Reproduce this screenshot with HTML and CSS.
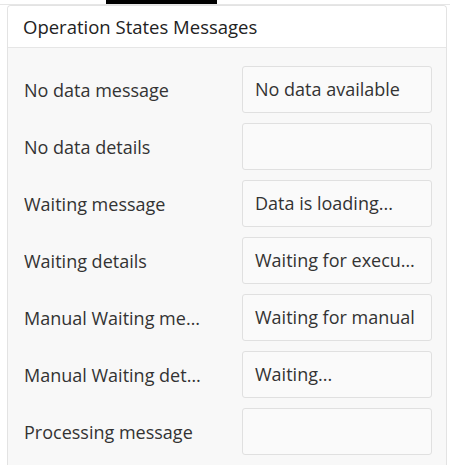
FILE: index.html
```html
<!DOCTYPE html>
<html lang="en">
<head>
    <meta charset="UTF-8">
    <meta name="viewport" content="width=device-width, initial-scale=1.0">
    <title>Operation States Messages</title>
    <link rel="stylesheet" href="styles.css">
</head>
<body>

    <div class="tabs">
        <div class="tab-ativa"></div>
    </div>

    <div class="painel">
        <div class="painel-titulo">Operation States Messages</div>

        <div class="painel-corpo">
            <div class="linha">
                <span class="rotulo">No data message</span>
                <div class="campo">No data available</div>
            </div>
            <div class="linha">
                <span class="rotulo">No data details</span>
                <div class="campo"></div>
            </div>
            <div class="linha">
                <span class="rotulo">Waiting message</span>
                <div class="campo">Data is loading...</div>
            </div>
            <div class="linha">
                <span class="rotulo">Waiting details</span>
                <div class="campo">Waiting for execution to start</div>
            </div>
            <div class="linha">
                <span class="rotulo">Manual Waiting message</span>
                <div class="campo">Waiting for manual</div>
            </div>
            <div class="linha">
                <span class="rotulo">Manual Waiting details</span>
                <div class="campo">Waiting...</div>
            </div>
            <div class="linha">
                <span class="rotulo">Processing message</span>
                <div class="campo"></div>
            </div>
        </div>
    </div>

</body>
</html>
```

FILE: styles.css
```css
body {
    font-family: "Open Sans", Arial, sans-serif;
    background-color: white;
    color: #333;
    margin: 0px;
    width: 450px;
    height: 465px;
    overflow: hidden;
}

.tabs {
    height: 4px;
    border-bottom: 1px solid #e6e6e6;
    padding-left: 106px;
}

.tab-ativa {
    width: 111px;
    height: 4px;
    background-color: #000;
}

.painel {
    margin-left: 7px;
    width: 438px;
    border: 1px solid #e3e3e3;
    border-bottom: none;
    border-radius: 4px 4px 0 0;
}

.painel-titulo {
    background-color: white;
    height: 41px;
    line-height: 41px;
    padding-left: 15px;
    font-size: 18.5px;
    color: #222;
    border-bottom: 1px solid #e6e6e6;
    border-radius: 4px 4px 0 0;
}

.painel-corpo {
    background-color: #f8f8f8;
    padding: 18px 14px 20px 16px;
    display: flex;
    flex-direction: column;
    gap: 10px;
}

.linha {
    display: flex;
    align-items: center;
    justify-content: space-between;
}

.rotulo {
    width: 178px;
    font-size: 18px;
    white-space: nowrap;
    overflow: hidden;
    text-overflow: ellipsis;
}

.campo {
    width: 164px;
    height: 45px;
    line-height: 45px;
    padding: 0 12px;
    background-color: #fafafa;
    border: 1px solid #e0e0e0;
    border-radius: 3px;
    font-size: 18px;
    white-space: nowrap;
    overflow: hidden;
    text-overflow: ellipsis;
}
```
